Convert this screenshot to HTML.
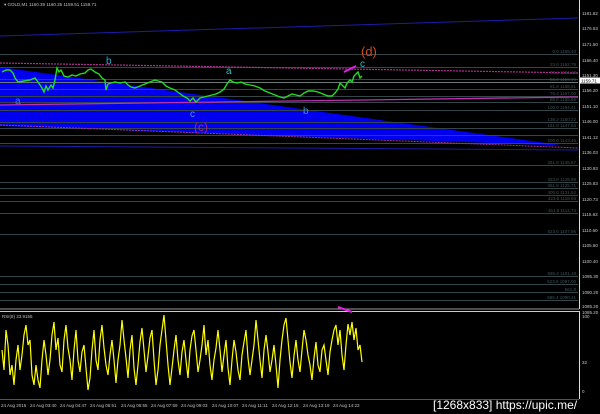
<!DOCTYPE html>
<html><head><meta charset="utf-8"><style>
html,body{margin:0;padding:0;background:#000;width:600px;height:414px;overflow:hidden}
svg{display:block}
text{font-family:"Liberation Sans",sans-serif}
</style></head><body>
<svg width="600" height="414" viewBox="0 0 600 414" xmlns="http://www.w3.org/2000/svg">
<rect width="600" height="414" fill="#000"/>
<!-- blue wedge -->
<polygon points="0,67 560,145 578,146 0,126" fill="#0000ee"/>
<line x1="0" y1="36" x2="578" y2="18" stroke="#1c1ca8" stroke-width="1"/>
<line x1="0" y1="146" x2="578" y2="150" stroke="#1c1ca8" stroke-width="1"/>
<!-- fib lines -->
<g stroke="#34464a" stroke-width="1">
<line x1="0" y1="54.5" x2="578" y2="54.5"/>
<line x1="0" y1="67.5" x2="578" y2="67.5"/>
<line x1="0" y1="79.5" x2="578" y2="79.5"/>
<line x1="0" y1="89.5" x2="578" y2="89.5"/>
<line x1="0" y1="96.5" x2="578" y2="96.5"/>
<line x1="0" y1="102.5" x2="578" y2="102.5"/>
<line x1="0" y1="110.5" x2="578" y2="110.5"/>
<line x1="0" y1="122.5" x2="578" y2="122.5"/>
<line x1="0" y1="128.5" x2="578" y2="128.5"/>
<line x1="0" y1="135.5" x2="578" y2="135.5"/>
<line x1="0" y1="143.5" x2="578" y2="143.5"/>
<line x1="0" y1="165.5" x2="578" y2="165.5"/>
<line x1="0" y1="182.5" x2="578" y2="182.5"/>
<line x1="0" y1="188.5" x2="578" y2="188.5"/>
<line x1="0" y1="195.5" x2="578" y2="195.5"/>
<line x1="0" y1="201.5" x2="578" y2="201.5"/>
<line x1="0" y1="213.5" x2="578" y2="213.5"/>
<line x1="0" y1="234.5" x2="578" y2="234.5"/>
<line x1="0" y1="276.5" x2="578" y2="276.5"/>
<line x1="0" y1="284.5" x2="578" y2="284.5"/>
<line x1="0" y1="292.5" x2="578" y2="292.5"/>
<line x1="0" y1="300.5" x2="578" y2="300.5"/>
</g>
<line x1="0" y1="82.5" x2="578" y2="82.5" stroke="#6a7878" stroke-width="1"/>
<!-- magenta lines -->
<line x1="0" y1="63" x2="578" y2="73" stroke="#b03090" stroke-width="1.2" stroke-dasharray="2,1"/>
<line x1="0" y1="105" x2="578" y2="97" stroke="#c030b0" stroke-width="1.3"/>
<line x1="0" y1="125" x2="578" y2="148" stroke="#a030a0" stroke-width="1" stroke-dasharray="2,1"/>
<!-- fib labels -->
<g fill="#3f5252" font-size="4.5" text-anchor="end">
<text x="576" y="53">0.0 1165.40</text><text x="576" y="66">23.6 1162.79</text>
<text x="576" y="74">38.2 1161.19</text><text x="576" y="81">50.0 1159.90</text>
<text x="576" y="88">61.8 1158.61</text><text x="576" y="95">76.4 1157.00</text>
<text x="576" y="101">88.6 1155.66</text><text x="576" y="109">100.0 1154.41</text>
<text x="576" y="121">138.2 1150.22</text><text x="576" y="127">161.8 1147.63</text>
<text x="576" y="142">200.0 1143.45</text><text x="576" y="164">261.8 1136.67</text>
<text x="576" y="181">323.6 1129.89</text><text x="576" y="187">361.8 1125.71</text>
<text x="576" y="194">400.0 1121.52</text><text x="576" y="200">423.6 1118.93</text>
<text x="576" y="212">461.8 1114.74</text><text x="576" y="233">523.6 1107.96</text>
<text x="576" y="275">585.4 1101.18</text><text x="576" y="283">623.6 1097.00</text>
<text x="576" y="291">661.8</text><text x="576" y="299">685.4 1090.41</text>
</g>
<!-- price line -->
<polyline fill="none" stroke="#22dd22" stroke-width="1.4" points="2,72 6,70 10,70 13,73 15,78 18,82 24,81 30,80 35,78 38,82 42,88 44,92 46,86 48,90 51,85 53,88 55,80 57,68 59,72 61,70 64,76 68,77 72,75 76,76 80,74 85,73 88,70 91,69 95,72 99,74 102,78 105,80 106,90 108,84 111,83 115,82 120,83 125,82 128,85 131,87 135,88 140,86 145,84 150,82 155,80 158,81 162,82 166,86 170,88 175,90 179,93 183,96 187,98 190,101 193,98 196,102 200,98 204,97 208,96 212,95 216,94 220,92 224,89 227,84 230,80 233,82 237,83 241,82 245,84 250,85 255,86 260,88 265,91 270,93 275,95 280,97 284,98 288,96 292,94 296,95 300,96 304,93 308,91 313,91 318,92 323,94 328,96 332,96 335,93 338,89 340,83 343,86 345,88 347,83 350,80 352,82 354,76 356,74 358,72 360,78 362,76"/>
<!-- wave labels -->
<g font-family="Liberation Serif,serif" font-size="10">
<text x="106" y="64" fill="#22b0d0">b</text>
<text x="15" y="104" fill="#3080e0">a</text>
<text x="190" y="117" fill="#3a9ae0">c</text>
<text x="194" y="131" fill="#a02880" font-size="12">(c)</text>
<text x="226" y="74" fill="#30c0c0">a</text>
<text x="303" y="114" fill="#3090e0">b</text>
<text x="361" y="56" fill="#d04a20" font-size="13">(d)</text>
<text x="360" y="67" fill="#30c0c0">c</text>
</g>
<line x1="344" y1="72" x2="356" y2="66" stroke="#e020e0" stroke-width="2"/>
<text x="4" y="6" fill="#c0c0c0" font-size="4.5">▾ GOLD,M1  1160.39 1160.35 1159.51 1159.71</text>
<!-- axis -->
<line x1="579.5" y1="0" x2="579.5" y2="309" stroke="#ddd" stroke-width="1"/>
<g fill="#c8c8c8" font-size="4.5">
<text x="582" y="15">1181.62</text><text x="582" y="30">1176.53</text><text x="582" y="46">1171.50</text>
<text x="582" y="62">1166.40</text><text x="582" y="77">1161.30</text><text x="582" y="92">1156.20</text>
<text x="582" y="108">1151.10</text><text x="582" y="123">1146.00</text><text x="582" y="139">1141.12</text>
<text x="582" y="154">1136.03</text><text x="582" y="170">1130.93</text><text x="582" y="185">1125.83</text>
<text x="582" y="201">1120.73</text><text x="582" y="216">1115.63</text><text x="582" y="232">1110.60</text>
<text x="582" y="247">1105.50</text><text x="582" y="263">1100.40</text><text x="582" y="278">1095.30</text>
<text x="582" y="294">1090.20</text><text x="582" y="308">1085.20</text>
</g>
<rect x="580" y="77.5" width="20" height="6" fill="#fff"/>
<text x="581" y="82.5" fill="#000" font-size="4.5">1159.71</text>
<!-- RSI panel -->
<line x1="0" y1="309" x2="579" y2="309" stroke="#999" stroke-width="1"/>
<line x1="0" y1="311.5" x2="579" y2="311.5" stroke="#ccc" stroke-width="1"/>
<line x1="579.5" y1="311" x2="579.5" y2="399" stroke="#ddd" stroke-width="1"/>
<line x1="0" y1="399.5" x2="579" y2="399.5" stroke="#555" stroke-width="1"/>
<line x1="338" y1="307" x2="352" y2="312" stroke="#e020e0" stroke-width="2"/>
<text x="582" y="314" fill="#c8c8c8" font-size="4.5">1085.20</text>
<text x="582" y="318" fill="#c8c8c8" font-size="4.5">100</text>
<text x="582" y="364" fill="#c8c8c8" font-size="4.5">32</text>
<text x="582" y="393" fill="#c8c8c8" font-size="4.5">0</text>
<text x="2" y="318" fill="#c0c0c0" font-size="4.5">RSI(8) 33.9155</text>
<polyline fill="none" stroke="#ffff00" stroke-width="1.2" points="2,350 4,370 6,330 8,345 10,375 12,365 14,385 16,360 18,345 20,370 22,355 24,335 26,325 28,345 30,340 32,375 34,385 36,365 38,380 40,388 42,360 44,340 46,355 48,375 50,360 52,335 54,322 56,350 58,338 60,365 62,372 64,340 66,325 68,348 70,360 72,380 74,350 76,330 78,360 80,372 82,352 84,345 86,368 88,390 90,378 92,350 94,330 96,360 98,370 100,340 102,325 104,348 106,365 108,375 110,355 112,340 114,360 116,383 118,360 120,345 122,320 124,340 126,358 128,378 130,350 132,335 134,368 136,385 138,365 140,342 142,328 144,350 146,372 148,356 150,338 152,330 154,360 156,385 158,370 160,345 162,330 164,315 166,340 168,365 170,385 172,368 174,350 176,335 178,360 180,375 182,352 184,340 186,360 188,378 190,350 192,336 194,330 196,350 198,372 200,360 202,345 204,325 206,355 208,340 210,365 212,380 214,360 216,348 218,330 220,350 222,372 224,355 226,340 228,368 230,385 232,360 234,340 236,352 238,370 240,380 242,355 244,342 246,330 248,358 250,375 252,360 254,345 256,320 258,340 260,360 262,378 264,350 266,335 268,352 270,372 272,360 274,345 276,365 278,388 280,360 282,340 284,325 286,318 288,340 290,362 292,378 294,356 296,340 298,360 300,372 302,350 304,330 306,340 308,355 310,365 312,380 314,358 316,342 318,365 320,372 322,350 324,345 326,360 328,375 330,352 332,340 334,330 336,325 338,345 340,330 342,355 344,370 346,345 348,324 350,335 352,322 354,340 356,328 358,350 360,345 362,362"/>
<!-- time labels -->
<g fill="#c0c0c0" font-size="4.5">
<text x="1" y="407">24 Aug 2015</text><text x="30" y="407">24 Aug 03:40</text><text x="60" y="407">24 Aug 04:47</text>
<text x="90" y="407">24 Aug 05:51</text><text x="121" y="407">24 Aug 06:55</text><text x="151" y="407">24 Aug 07:59</text>
<text x="181" y="407">24 Aug 09:03</text><text x="212" y="407">24 Aug 10:07</text><text x="242" y="407">24 Aug 11:11</text>
<text x="272" y="407">24 Aug 12:15</text><text x="303" y="407">24 Aug 13:19</text><text x="333" y="407">24 Aug 14:23</text>
</g>
<text x="433" y="409" fill="#fff" font-size="12" font-family="DejaVu Sans Condensed,DejaVu Sans,sans-serif">[1268x833] https://upic.me/</text>
</svg>
</body></html>
